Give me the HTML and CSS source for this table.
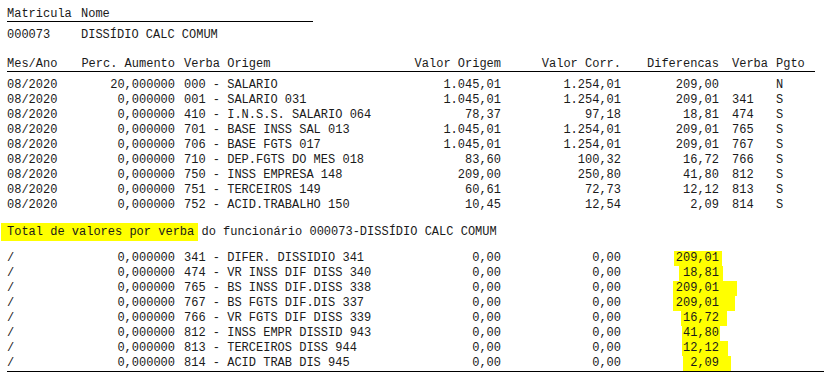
FILE: index.html
```html
<!DOCTYPE html>
<html lang="pt-BR">
<head>
<meta charset="utf-8">
<title>Dissídio</title>
<link rel="stylesheet" href="styles.css">
</head>
<body>
<div class="page">
  <table class="emp">
    <colgroup><col class="e1"><col class="e2"></colgroup>
    <thead><tr><th>Matricula</th><th>Nome</th></tr></thead>
    <tbody><tr><td>000073</td><td>DISSÍDIO CALC COMUM</td></tr></tbody>
  </table>

  <table class="grid main">
    <colgroup>
      <col class="c1"><col class="c2"><col class="c3"><col class="c4"><col class="c5"><col class="c6"><col class="c7"><col class="c8">
    </colgroup>
    <thead>
      <tr>
        <th>Mes/Ano</th><th class="r">Perc. Aumento</th><th class="v">Verba Origem</th><th class="r">Valor Origem</th><th class="r">Valor Corr.</th><th class="r">Diferencas</th><th class="vb">Verba</th><th>Pgto</th>
      </tr>
    </thead>
    <tbody>
      <tr><td>08/2020</td><td class="r">20,000000</td><td class="v">000 - SALARIO</td><td class="r">1.045,01</td><td class="r">1.254,01</td><td class="r">209,00</td><td class="vb"></td><td>N</td></tr>
      <tr><td>08/2020</td><td class="r">0,000000</td><td class="v">001 - SALARIO 031</td><td class="r">1.045,01</td><td class="r">1.254,01</td><td class="r">209,01</td><td class="vb">341</td><td>S</td></tr>
      <tr><td>08/2020</td><td class="r">0,000000</td><td class="v">410 - I.N.S.S. SALARIO 064</td><td class="r">78,37</td><td class="r">97,18</td><td class="r">18,81</td><td class="vb">474</td><td>S</td></tr>
      <tr><td>08/2020</td><td class="r">0,000000</td><td class="v">701 - BASE INSS SAL 013</td><td class="r">1.045,01</td><td class="r">1.254,01</td><td class="r">209,01</td><td class="vb">765</td><td>S</td></tr>
      <tr><td>08/2020</td><td class="r">0,000000</td><td class="v">706 - BASE FGTS 017</td><td class="r">1.045,01</td><td class="r">1.254,01</td><td class="r">209,01</td><td class="vb">767</td><td>S</td></tr>
      <tr><td>08/2020</td><td class="r">0,000000</td><td class="v">710 - DEP.FGTS DO MES 018</td><td class="r">83,60</td><td class="r">100,32</td><td class="r">16,72</td><td class="vb">766</td><td>S</td></tr>
      <tr><td>08/2020</td><td class="r">0,000000</td><td class="v">750 - INSS EMPRESA 148</td><td class="r">209,00</td><td class="r">250,80</td><td class="r">41,80</td><td class="vb">812</td><td>S</td></tr>
      <tr><td>08/2020</td><td class="r">0,000000</td><td class="v">751 - TERCEIROS 149</td><td class="r">60,61</td><td class="r">72,73</td><td class="r">12,12</td><td class="vb">813</td><td>S</td></tr>
      <tr><td>08/2020</td><td class="r">0,000000</td><td class="v">752 - ACID.TRABALHO 150</td><td class="r">10,45</td><td class="r">12,54</td><td class="r">2,09</td><td class="vb">814</td><td>S</td></tr>
    </tbody>
  </table>

  <p class="total"><span class="mark">Total de valores por verba</span> do funcionário 000073-DISSÍDIO CALC COMUM</p>

  <table class="grid sum">
    <colgroup>
      <col class="c1"><col class="c2"><col class="c3"><col class="c4"><col class="c5"><col class="c6"><col class="c7"><col class="c8w">
    </colgroup>
    <tbody>
      <tr><td>/</td><td class="r">0,000000</td><td class="v">341 - DIFER. DISSIDIO 341</td><td class="r">0,00</td><td class="r">0,00</td><td class="r"><span class="hl hl1">209,01</span></td><td></td><td></td></tr>
      <tr><td>/</td><td class="r">0,000000</td><td class="v">474 - VR INSS DIF DISS 340</td><td class="r">0,00</td><td class="r">0,00</td><td class="r"><span class="hl hl2">18,81</span></td><td></td><td></td></tr>
      <tr><td>/</td><td class="r">0,000000</td><td class="v">765 - BS INSS DIF.DISS 338</td><td class="r">0,00</td><td class="r">0,00</td><td class="r"><span class="hl hl3">209,01</span></td><td></td><td></td></tr>
      <tr><td>/</td><td class="r">0,000000</td><td class="v">767 - BS FGTS DIF.DIS 337</td><td class="r">0,00</td><td class="r">0,00</td><td class="r"><span class="hl hl4">209,01</span></td><td></td><td></td></tr>
      <tr><td>/</td><td class="r">0,000000</td><td class="v">766 - VR FGTS DIF DISS 339</td><td class="r">0,00</td><td class="r">0,00</td><td class="r"><span class="hl hl5">16,72</span></td><td></td><td></td></tr>
      <tr><td>/</td><td class="r">0,000000</td><td class="v">812 - INSS EMPR DISSID 943</td><td class="r">0,00</td><td class="r">0,00</td><td class="r"><span class="hl hl6">41,80</span></td><td></td><td></td></tr>
      <tr><td>/</td><td class="r">0,000000</td><td class="v">813 - TERCEIROS DISS 944</td><td class="r">0,00</td><td class="r">0,00</td><td class="r"><span class="hl hl7">12,12</span></td><td></td><td></td></tr>
      <tr><td>/</td><td class="r">0,000000</td><td class="v">814 - ACID TRAB DIS 945</td><td class="r">0,00</td><td class="r">0,00</td><td class="r"><span class="hl hl8">2,09</span></td><td></td><td></td></tr>
    </tbody>
  </table>
</div>
</body>
</html>
```

FILE: styles.css
```css
html, body {
  margin: 0;
  padding: 0;
  background: #ffffff;
}

body {
  font-family: "Liberation Mono", "Courier New", monospace;
  font-size: 12px;
  color: #1a1a1a;
}

.page {
  padding: 7px 0 0 7px;
}

table {
  border-collapse: collapse;
  table-layout: fixed;
}

th, td {
  padding: 0;
  font-weight: normal;
  text-align: left;
  white-space: pre;
  line-height: 15px;
  overflow: visible;
}

.r { text-align: right; }
.v { padding-left: 9px; }
.vb { padding-left: 13px; }

/* employee block */
.emp { width: 306px; }
.emp .e1 { width: 74px; }
.emp thead th {
  border-bottom: 1px solid #000;
  line-height: 14px;
}
.emp tbody td { padding-top: 6px; }

/* main grid */
.c1 { width: 74px; }
.c2 { width: 94px; }
.c3 { width: 216px; }
.c4 { width: 110px; }
.c5 { width: 120px; }
.c6 { width: 98px; }
.c7 { width: 57px; }
.c8 { width: 39px; }
.c8w { width: 48px; }

.main { width: 808px; margin-top: 15px; }
.main thead th {
  border-bottom: 1px solid #000;
  line-height: 13px;
}
.main tbody tr:first-child td { padding-top: 6px; }

.total {
  margin: 12px 0 0 0;
  line-height: 15px;
  white-space: pre;
}

.mark {
  background: #ffff00;
  padding: 2px 4px 2px 6px;
  margin: 0 -4px 0 -6px;
}

.sum { width: 817px; margin-top: 11px; }
.sum tbody tr:last-child td { border-bottom: 1px solid #000; }

.hl {
  display: inline-block;
  background: #ffff00;
  line-height: 15px;
}
.hl1 { padding: 0 3px 0 2px; margin-right: -3px; }
.hl2 { padding: 0 4px 0 4px; margin-right: -4px; }
.hl3 { padding: 0 18px 0 3px; margin-right: -18px; }
.hl4 { padding: 0 16px 0 3px; margin-right: -16px; }
.hl5 { padding: 0 8px 0 2px; margin-right: -8px; }
.hl6 { padding: 0 1px 0 1px; margin-right: -1px; }
.hl7 { padding: 0 9px 0 1px; margin-right: -9px; }
.hl8 { padding: 0 12px 0 7px; margin-right: -12px; }
```
